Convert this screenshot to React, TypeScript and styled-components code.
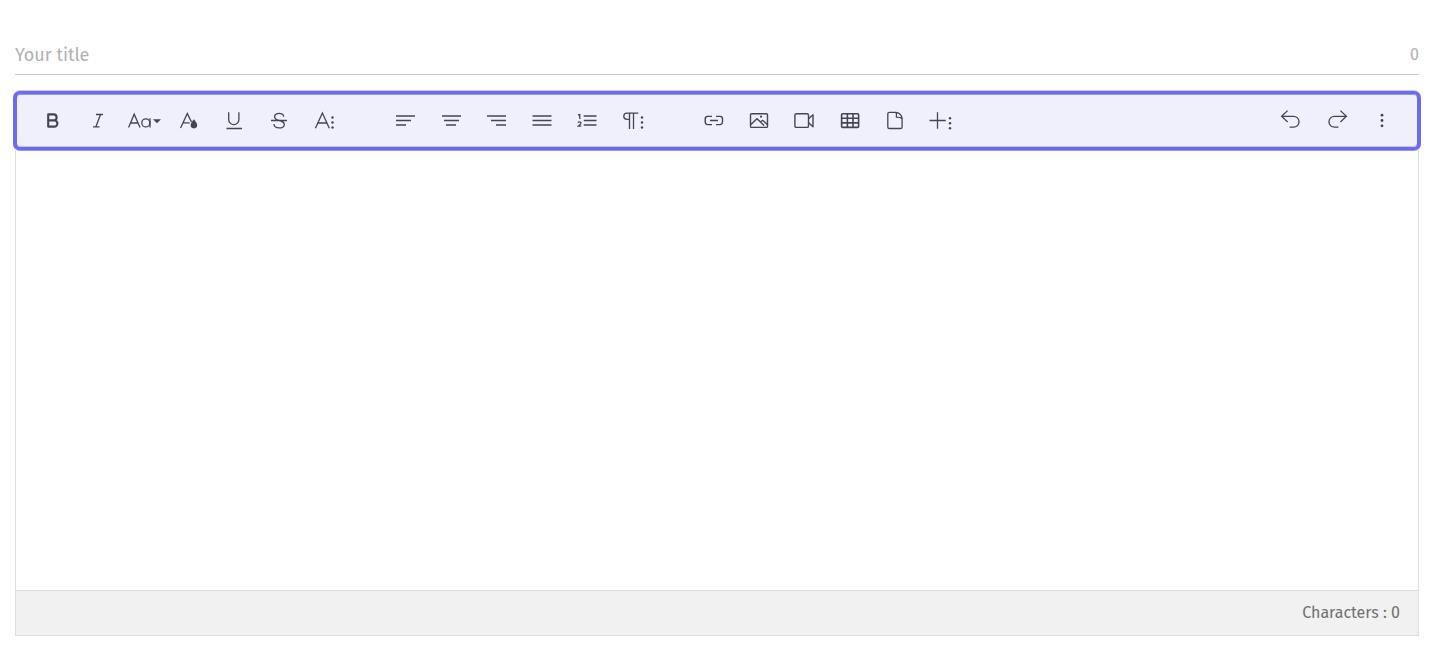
import React, { useState } from "react";
import styled, { createGlobalStyle } from "styled-components";

const GlobalStyle = createGlobalStyle`
  *, *::before, *::after { box-sizing: border-box; }
  body {
    margin: 0;
    background: #fff;
    font-family: "Fira Sans", "Noto Sans", sans-serif;
    color: #6b6b6b;
  }
`;

const Page = styled.main`
  padding: 36px 14px 12px 15px;
`;

const TitleRow = styled.div`
  display: flex;
  align-items: center;
  height: 39px;
  border-bottom: 1px solid #ccc;
`;

const TitleInput = styled.input`
  flex: 1;
  min-width: 0;
  padding: 0;
  border: 0;
  outline: 0;
  background: transparent;
  font: 400 18px/24px "Fira Sans", "Noto Sans", sans-serif;
  color: #555;
  &::placeholder { color: #b1b1b1; opacity: 1; }
`;

const TitleCount = styled.span`
  font-size: 16px;
  line-height: 24px;
  color: #b1b1b1;
`;

const Toolbar = styled.div`
  position: relative;
  display: flex;
  flex-wrap: wrap;
  align-items: center;
  gap: 0 36px;
  min-height: 59px;
  margin: 16px -2px 0;
  padding: 0 12px 0 13px;
  border: solid #6b6ceb;
  border-width: 3px 4px;
  border-radius: 7px;
  background: #f0f0fd;
  box-shadow: 0 -1px #c4c4f6, 0 1px #9495f0, inset 0 1px #9495f0, inset 0 -1px #c4c4f6;
`;

const Group = styled.div<{ $count: number; $width: number; $end?: boolean }>`
  display: grid;
  grid-template-columns: repeat(${(p) => p.$count}, 1fr);
  width: ${(p) => p.$width}px;
  margin-left: ${(p) => (p.$end ? "auto" : "0")};
`;

const ToolButton = styled.button`
  display: flex;
  align-items: center;
  justify-content: center;
  height: 41px;
  padding: 0;
  border: 0;
  border-radius: 4px;
  background: transparent;
  color: #45444f;
  cursor: pointer;
  &:hover { background: #e2e2fa; }
`;

const Glyph = styled.svg`
  display: block;
  flex: none;
  width: 36px;
  height: 33px;
  overflow: visible;
  fill: none;
  stroke: currentColor;
  stroke-width: 1.3;
`;

const Editor = styled.section`
  border: 1px solid #dedede;
  border-top: 0;
`;

const Content = styled.textarea`
  display: block;
  width: 100%;
  height: 440px;
  padding: 20px;
  border: 0;
  outline: 0;
  resize: none;
  background: #fff;
  font: 400 16px/24px "Fira Sans", "Noto Sans", sans-serif;
  color: #414141;
`;

const Footer = styled.footer`
  display: flex;
  align-items: center;
  justify-content: flex-end;
  height: 45px;
  padding: 0 18px;
  border-top: 1px solid #dedede;
  background: #f1f1f1;
  font-size: 16px;
  line-height: 24px;
  color: #707070;
`;

const Dots = ({ x, ys, r = 1.2 }: { x: number; ys: number[]; r?: number }) => (
  <g fill="currentColor" stroke="none">
    {ys.map((y) => (
      <circle key={y} cx={x} cy={y} r={r} />
    ))}
  </g>
);

type Tool = { label: string; icon: React.ReactNode };

const textTools: Tool[] = [
  {
    label: "Bold",
    icon: (
      <path
        strokeWidth="2.1"
        strokeLinejoin="round"
        d="M13.2 10.4h5.4a3 3 0 0 1 0 6h-5.4zM13.2 16.4h6.1a3.1 3.1 0 0 1 0 6.2h-6.1z"
      />
    ),
  },
  { label: "Italic", icon: <path d="M16 10.5h7M13 22.9h6.5M20.5 10.5l-4.7 12.4" /> },
  {
    label: "Font Size",
    icon: (
      <>
        <path d="M3.6 23.4L9.2 10.2l5.8 13.2M5.7 19h7.3" />
        <circle cx="20.8" cy="18.9" r="4" />
        <path d="M25 14.3v9.1" />
        <path d="M28 15.2h8l-4 4z" fill="currentColor" stroke="none" />
      </>
    ),
  },
  {
    label: "Text Color",
    icon: (
      <>
        <path d="M10.6 24l6.7-14.4 4.2 8.4M13.2 18.8h6.5" />
        <path
          d="M23.9 15.3c1.5 2 3.3 4 3.3 5.8a3.3 3.3 0 0 1-6.6 0c0-1.800 1.800-3.800 3.300-5.800z"
          fill="currentColor"
          stroke="none"
        />
      </>
    ),
  },
  { label: "Underline", icon: <path d="M12.7 8.3v7.2a5.1 5.1 0 0 0 10.2 0V8.3M10.5 24.5h15.5" /> },
  {
    label: "Strikethrough",
    icon: (
      <path d="M10 16.5h16M22.8 12.6a4.7 3.7 0 0 0-9.300 0c0 2 1.500 3.200 4.500 3.900s5.300 1.500 5.300 3.900c0 2.100-2.300 3.500-5.200 3.500s-5-1.500-5.200-3.900" />
    ),
  },
  {
    label: "More Text",
    icon: (
      <>
        <path d="M9.4 24.3l7-15.3 6.9 15.3M12 19h8.9" />
        <Dots x={26.5} ys={[13.5, 18.5, 23.5]} />
      </>
    ),
  },
];

const paragraphTools: Tool[] = [
  { label: "Align Left", icon: <path strokeWidth="1.6" d="M8 12h19M8 16.500h15M8 21h10" /> },
  { label: "Align Center", icon: <path strokeWidth="1.6" d="M9 12h19M11 16.500h15M13 21h10" /> },
  { label: "Align Right", icon: <path strokeWidth="1.6" d="M9 12h19M13 16.500h15M18 21h10" /> },
  { label: "Align Justify", icon: <path strokeWidth="1.6" d="M8.500 12h19M8.500 16.500h19M8.500 21h19" /> },
  {
    label: "Ordered List",
    icon: (
      <>
        <path strokeWidth="1.6" d="M14.7 12h12.8M14.7 16.5h12.8M14.7 21h12.8" />
        <path d="M9 11l1.8-.5v4.500M9 18.700c.5-1.200 3-1.200 3 .2 0 1-1.500 2-2.700 3.300h3" />
      </>
    ),
  },
  {
    label: "More Paragraph",
    icon: (
      <>
        <path d="M24.3 9.2H12.900a3.100 3.100 0 0 0 0 6.200h2.400M15.500 9.200v15.800M19.500 9.200v15.800" />
        <Dots x={28} ys={[13.5, 18.5, 23.5]} />
      </>
    ),
  },
];

const richTools: Tool[] = [
  {
    label: "Insert Link",
    icon: (
      <path
        strokeWidth="1.4"
        d="M16 12.400h-4.300a2.500 2.500 0 0 0-2.500 2.500v3.200a2.500 2.500 0 0 0 2.500 2.500H16M20 12.400h4a2.500 2.500 0 0 1 2.500 2.500v3.200a2.500 2.500 0 0 1-2.500 2.500h-4M14 16.500h8"
      />
    ),
  },
  {
    label: "Insert Image",
    icon: (
      <>
        <rect x="9.5" y="9.8" width="17" height="13.600" rx="1" strokeWidth="1.4" />
        <path strokeWidth="1.4" d="M9.800 20.600l6.200-5.800 7.200 6.800M19.400 18l2.300-1.700 4.700 4.300" />
        <circle cx="20" cy="12.700" r="1.1" fill="currentColor" stroke="none" />
      </>
    ),
  },
  {
    label: "Insert Video",
    icon: (
      <>
        <rect x="8.9" y="9.8" width="13.600" height="13.600" rx="1.500" strokeWidth="1.4" />
        <path strokeWidth="1.4" d="M22.500 14.700l4.500-4v12l-4.500-4" strokeLinejoin="round" />
      </>
    ),
  },
  {
    label: "Insert Table",
    icon: (
      <>
        <rect x="9.6" y="9.8" width="17" height="13.600" rx="1" strokeWidth="1.6" />
        <path strokeWidth="1.6" d="M15.400 10v13.500M21 10v13.500M9.600 14.300h17M9.600 18.900h17" />
      </>
    ),
  },
  {
    label: "Upload File",
    icon: (
      <path
        strokeLinejoin="round"
        d="M18.800 8.300h-6.400a1.600 1.600 0 0 0-1.600 1.600v13a1.600 1.600 0 0 0 1.600 1.600h11.100a1.600 1.600 0 0 0 1.600-1.600V14.500c0-3-3.300-6.200-6.300-6.200zc1 1.300.8 3 .6 4.900 2 0 4.300 0 5.700 1.500"
      />
    ),
  },
  {
    label: "More Rich",
    icon: (
      <>
        <path d="M7.500 16.500h16.300M15.500 8.200v16.600" />
        <Dots x={28} ys={[14.3, 19.3, 24.3]} />
      </>
    ),
  },
];

const miscTools: Tool[] = [
  { label: "Undo", icon: <path d="M15.600 6.600l-6 5.700 6 5.700M9.600 12.300h12a5.450 5.450 0 0 1 0 10.900h-4" /> },
  { label: "Redo", icon: <path d="M22.400 6.600l6 5.700-6 5.700M28.400 12.300h-12a5.450 5.450 0 0 0 0 10.900h4" /> },
  { label: "More Misc", icon: <Dots x={18} ys={[11.2, 16.5, 21.8]} r={1.4} /> },
];

const ToolGroup = ({ name, tools, width, end }: { name: string; tools: Tool[]; width: number; end?: boolean }) => (
  <Group role="group" aria-label={name} $count={tools.length} $width={width} $end={end}>
    {tools.map((tool) => (
      <ToolButton key={tool.label} type="button" aria-label={tool.label}>
        <Glyph viewBox="0 0 36 33" aria-hidden="true">
          {tool.icon}
        </Glyph>
      </ToolButton>
    ))}
  </Group>
);

export default function App() {
  const [title, setTitle] = useState("");
  const [body, setBody] = useState("");

  return (
    <>
      <GlobalStyle />
      <Page>
        <TitleRow>
          <TitleInput
            aria-label="Your title"
            placeholder="Your title"
            value={title}
            onChange={(e) => setTitle(e.target.value)}
          />
          <TitleCount>{title.length}</TitleCount>
        </TitleRow>
        <Toolbar role="toolbar" aria-label="Formatting">
          <ToolGroup name="Text" tools={textTools} width={317} />
          <ToolGroup name="Paragraph" tools={paragraphTools} width={272} />
          <ToolGroup name="Insert" tools={richTools} width={272} />
          <ToolGroup name="History" tools={miscTools} width={138} end />
        </Toolbar>
        <Editor>
          <Content aria-label="Content" value={body} onChange={(e) => setBody(e.target.value)} />
          <Footer>Characters : {body.length}</Footer>
        </Editor>
      </Page>
    </>
  );
}
